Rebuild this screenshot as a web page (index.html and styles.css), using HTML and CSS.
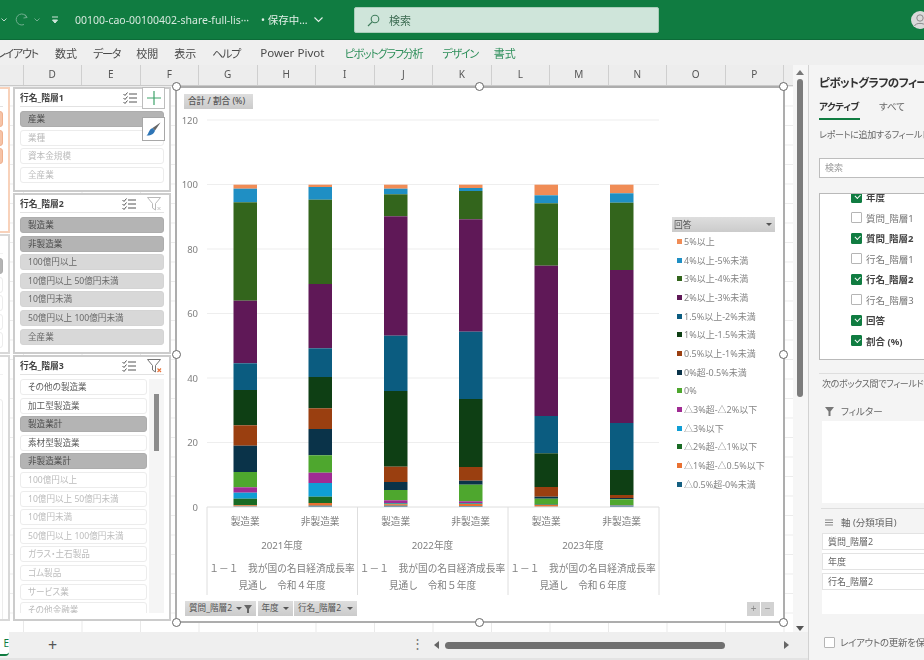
FILE: index.html
```html
<!DOCTYPE html>
<html lang="ja">
<head>
  <meta charset="UTF-8">
  <title>ピボットグラフ</title>
  <link rel="stylesheet" href="styles.css">
</head>
<body>
  <div class="app">
    <!-- title bar -->
    <header class="titlebar">
      <svg class="qa-icon qa-undo" width="6" height="4" viewBox="0 0 6 4"><path d="M0.5 0.5 L3 3 L5.5 0.5" fill="none" stroke="#bcd9c9"/></svg>
      <svg class="qa-icon qa-redo" width="15" height="15" viewBox="0 0 15 15"><path d="M11 2.5 L13 5.5 L9.5 6 M12.8 5.4 A5.5 5.5 0 1 0 10 12.5" fill="none" stroke="#6fae8e" stroke-width="1"/></svg>
      <svg class="qa-icon qa-chev" width="6" height="4" viewBox="0 0 6 4"><path d="M0.5 0.5 L3 3 L5.5 0.5" fill="none" stroke="#6fae8e"/></svg>
      <svg class="qa-icon qa-more" width="8" height="8" viewBox="0 0 8 8"><path d="M1 1 H7 M1.5 4 H6.5 L4 7 Z" fill="#cfe5da" stroke="#cfe5da" stroke-width="1"/></svg>
      <span class="doc-name">00100-cao-00100402-share-full-lis···</span>
      <span class="doc-state">• 保存中...</span>
      <svg class="state-chev" width="9" height="6" viewBox="0 0 9 6"><path d="M0.5 0.5 L4.5 4.5 L8.5 0.5" fill="none" stroke="#e3f0e9" stroke-width="1.1"/></svg>
      <div class="searchbox">
        <svg width="13" height="13" viewBox="0 0 13 13"><circle cx="8" cy="5" r="3.8" fill="none" stroke="#3f7d5c" stroke-width="1.1"/><path d="M5.2 7.8 L1 12" stroke="#3f7d5c" stroke-width="1.2"/></svg>
        <span>検索</span>
      </div>
      <div class="avatar">
        <svg width="18" height="18" viewBox="0 0 18 18"><circle cx="9" cy="9" r="9" fill="#d9d9d9"/><circle cx="9" cy="7" r="3.2" fill="none" stroke="#8a8a8a"/><path d="M3.5 15 C4.5 11.5 13.5 11.5 14.5 15" fill="none" stroke="#8a8a8a"/></svg>
      </div>
    </header>

    <!-- ribbon tabs -->
    <nav class="ribbon">
      <span class="tab tab-kana tab-cut">レイアウト</span>
      <span class="tab">数式</span>
      <span class="tab tab-kana">データ</span>
      <span class="tab">校閲</span>
      <span class="tab">表示</span>
      <span class="tab tab-kana">ヘルプ</span>
      <span class="tab tab-power">Power Pivot</span>
      <span class="tab tab-kana tab-green tab-analyze">ピボットグラフ分析</span>
      <span class="tab tab-kana tab-green">デザイン</span>
      <span class="tab tab-green">書式</span>
    </nav>

    <div class="main">
      <div class="workspace">
        <div class="work-row">
          <div class="sheet-col">
            <div class="col-heads">
              <span class="col-head col-first"></span>
              <span class="col-head">D</span><span class="col-head">E</span><span class="col-head">F</span>
              <span class="col-head">G</span><span class="col-head">H</span><span class="col-head">I</span>
              <span class="col-head">J</span><span class="col-head">K</span><span class="col-head">L</span>
              <span class="col-head">M</span><span class="col-head">N</span><span class="col-head">O</span>
              <span class="col-head">P</span>
            </div>

            <div class="sheet">
              <!-- slicers cut off at the left edge -->
              <div class="slicer slicer-cut slicer-a">
                <div class="slicer-head"></div>
                <div class="slicer-items">
                  <div class="item item-salmon"></div>
                  <div class="item item-salmon"></div>
                  <div class="item item-salmon"></div>
                </div>
              </div>
              <div class="slicer slicer-cut slicer-b">
                <div class="slicer-head"></div>
                <div class="slicer-items">
                  <div class="item item-on"></div>
                  <div class="item"></div>
                  <div class="item"></div>
                  <div class="item"></div>
                  <div class="item"></div>
                </div>
              </div>
              <div class="slicer slicer-cut slicer-c">
                <div class="slicer-head"></div>
                <div class="slicer-items">
                  <div class="item item-panel"></div>
                </div>
              </div>

              <!-- slicer 1 -->
              <section class="slicer slicer-1">
                <div class="slicer-head">
                  <span class="slicer-title">行名_階層1</span>
                  <svg class="multi-icon" width="14" height="12" viewBox="0 0 14 12"><path d="M0.5 2 L2 3.5 L4.5 0.5 M0.5 6 L2 7.5 L4.5 4.5 M0.5 10 L2 11.5 L4.5 8.5" fill="none" stroke="#555"/><path d="M6 2 H14 M6 6 H14 M6 10 H14" stroke="#555"/></svg>
                </div>
                <div class="slicer-items">
                  <div class="item item-on">産業</div>
                  <div class="item item-off">業種</div>
                  <div class="item item-off">資本金規模</div>
                  <div class="item item-off">全産業</div>
                </div>
              </section>

              <!-- slicer 2 -->
              <section class="slicer slicer-2">
                <div class="slicer-head">
                  <span class="slicer-title">行名_階層2</span>
                  <svg class="multi-icon" width="14" height="12" viewBox="0 0 14 12"><path d="M0.5 2 L2 3.5 L4.5 0.5 M0.5 6 L2 7.5 L4.5 4.5 M0.5 10 L2 11.5 L4.5 8.5" fill="none" stroke="#555"/><path d="M6 2 H14 M6 6 H14 M6 10 H14" stroke="#555"/></svg>
                  <svg class="filter-icon" width="15" height="14" viewBox="0 0 15 14"><path d="M0.5 0.5 H13.5 L8.5 6.5 V13 L5.5 11 V6.5 Z" fill="none" stroke="#b9b9b9"/><path d="M10.5 10 L13.5 13 M13.5 10 L10.5 13" stroke="#c8c8c8"/></svg>
                </div>
                <div class="slicer-items">
                  <div class="item item-on">製造業</div>
                  <div class="item item-on">非製造業</div>
                  <div class="item item-dim">100億円以上</div>
                  <div class="item item-dim">10億円以上 50億円未満</div>
                  <div class="item item-dim">10億円未満</div>
                  <div class="item item-dim">50億円以上 100億円未満</div>
                  <div class="item item-dim">全産業</div>
                </div>
              </section>

              <!-- slicer 3 -->
              <section class="slicer slicer-3">
                <div class="slicer-head">
                  <span class="slicer-title">行名_階層3</span>
                  <svg class="multi-icon" width="14" height="12" viewBox="0 0 14 12"><path d="M0.5 2 L2 3.5 L4.5 0.5 M0.5 6 L2 7.5 L4.5 4.5 M0.5 10 L2 11.5 L4.5 8.5" fill="none" stroke="#555"/><path d="M6 2 H14 M6 6 H14 M6 10 H14" stroke="#555"/></svg>
                  <svg class="filter-icon" width="15" height="14" viewBox="0 0 15 14"><path d="M0.5 0.5 H13.5 L8.5 6.5 V13 L5.5 11 V6.5 Z" fill="none" stroke="#777"/><path d="M10.5 9.5 L14 13 M14 9.5 L10.5 13" stroke="#e8743b" stroke-width="1.2"/></svg>
                </div>
                <div class="slicer-scroll">
                  <div class="slicer-items">
                    <div class="item">その他の製造業</div>
                    <div class="item">加工型製造業</div>
                    <div class="item item-on">製造業計</div>
                    <div class="item">素材型製造業</div>
                    <div class="item item-on">非製造業計</div>
                    <div class="item item-off">100億円以上</div>
                    <div class="item item-off">10億円以上 50億円未満</div>
                    <div class="item item-off">10億円未満</div>
                    <div class="item item-off">50億円以上 100億円未満</div>
                    <div class="item item-off">ガラス・土石製品</div>
                    <div class="item item-off">ゴム製品</div>
                    <div class="item item-off">サービス業</div>
                    <div class="item item-off">その他金融業</div>
                  </div>
                  <div class="slicer-track"><div class="slicer-thumb"></div></div>
                </div>
              </section>

              <button class="float-btn btn-add">
                <svg width="14" height="14" viewBox="0 0 14 14"><path d="M7 0 V14 M0 7 H14" stroke="#3fa36b" stroke-width="1.2"/></svg>
              </button>
              <button class="float-btn btn-brush">
                <svg width="15" height="15" viewBox="0 0 15 15"><path d="M14.5 0.5 L6.5 6 L9 8.5 Z" fill="#666"/><path d="M6.5 6 L9 8.5 C8.5 12 4 14 0.5 13.5 C3 12 2.5 7.5 6.5 6 Z" fill="#2e75b6"/></svg>
              </button>

              <!-- chart -->
              <div class="chart">
                <svg id="plot" class="plot" width="606" height="533" viewBox="177 88 606 533"></svg>
                <span class="field-btn field-value">合計 / 割合 (%)</span>
                <div class="axis-fields">
                  <span class="field-btn field-q">質問_階層2 <i class="caret"></i><svg width="8" height="8" viewBox="0 0 8 8"><path d="M0 0 H8 L5 4 V8 H3 V4 Z" fill="#666"/></svg></span>
                  <span class="field-btn field-y">年度 <i class="caret"></i></span>
                  <span class="field-btn field-r">行名_階層2 <i class="caret"></i></span>
                </div>
                <div class="zoom-btns">
                  <span class="zoom-btn">+</span>
                  <span class="zoom-btn">−</span>
                </div>
                <div class="legend">
                  <div class="legend-head"><span>回答</span><i class="caret"></i></div>
                  <div id="legendItems"></div>
                </div>
                <i class="handle h-tl"></i><i class="handle h-tc"></i><i class="handle h-tr"></i>
                <i class="handle h-ml"></i><i class="handle h-mr"></i>
                <i class="handle h-bl"></i><i class="handle h-bc"></i><i class="handle h-br"></i>
              </div>
            </div>
          </div>

          <div class="vscroll">
            <i class="arrow-up"></i>
            <div class="vthumb"></div>
            <i class="arrow-down"></i>
          </div>
        </div>

        <!-- sheet tabs and horizontal scrollbar -->
        <footer class="sheetbar">
          <div class="sheet-tab"><span>E</span></div>
          <span class="add-sheet">+</span>
          <span class="bar-dots">⋮</span>
          <i class="arrow-left"></i>
          <div class="hthumb"></div>
          <i class="arrow-right"></i>
        </footer>
      </div>

      <!-- field pane -->
      <aside class="pane">
        <div class="pane-body">
          <h2 class="pane-title">ピボットグラフのフィールド</h2>
          <div class="pane-tabs">
            <span class="pane-tab active">アクティブ</span>
            <span class="pane-tab">すべて</span>
          </div>
          <p class="hint">レポートに追加するフィールドを選択してください:</p>
          <div class="pane-search">検索</div>
          <div class="field-list">
            <label class="field checked"><i class="check"></i>年度</label>
            <label class="field"><i class="check"></i>質問_階層1</label>
            <label class="field checked"><i class="check"></i>質問_階層2</label>
            <label class="field"><i class="check"></i>行名_階層1</label>
            <label class="field checked"><i class="check"></i>行名_階層2</label>
            <label class="field"><i class="check"></i>行名_階層3</label>
            <label class="field checked"><i class="check"></i>回答</label>
            <label class="field checked"><i class="check"></i>割合 (%)</label>
          </div>
          <div class="pane-rule rule-1"></div>
          <p class="hint hint-2">次のボックス間でフィールドをドラッグしてください:</p>
          <div class="area-label label-filter">
            <svg width="9" height="9" viewBox="0 0 9 9"><path d="M0 0 H9 L5.5 4.5 V9 H3.5 V4.5 Z" fill="#777"/></svg>
            <span>フィルター</span>
          </div>
          <div class="area-box box-filter"></div>
          <div class="pane-rule rule-2"></div>
          <div class="area-label label-axis">
            <svg width="9" height="7" viewBox="0 0 9 7"><path d="M0 1 H8 M0 3.5 H8 M0 6 H8" stroke="#888"/></svg>
            <span>軸 (分類項目)</span>
          </div>
          <div class="area-box box-axis">
            <div class="area-row">質問_階層2</div>
            <div class="area-row">年度</div>
            <div class="area-row">行名_階層2</div>
          </div>
          <div class="defer"><i class="check"></i>レイアウトの更新を保留する</div>
        </div>
      </aside>
    </div>
  </div>
  <script src="chart.js"></script>
</body>
</html>
```

FILE: styles.css
```css
/* Base */
html, body {
  margin: 0;
  padding: 0;
  width: 924px;
  height: 660px;
  overflow: hidden;
  background: #fff;
}
* {
  box-sizing: border-box;
}
body {
  font-family: "Noto Sans", "Noto Sans CJK JP", sans-serif;
  font-feature-settings: "palt";
  color: #444;
}
.app {
  width: 924px;
  height: 660px;
  display: flex;
  flex-direction: column;
  overflow: hidden;
  filter: blur(0.6px); /* the reference is a soft, scaled-up capture */
}

/* Title bar */
.titlebar {
  height: 40px;
  flex: none;
  background: #107c41;
  display: flex;
  align-items: center;
  position: relative;
  border-bottom: 1px solid #0c6b38;
}
.qa-icon {
  flex: none;
}
.qa-undo { margin-left: 1px; }
.qa-redo { margin-left: 7px; }
.qa-chev { margin-left: 5px; }
.qa-more { margin-left: 11px; }
.doc-name {
  margin-left: 16px;
  width: 186px;
  flex: none;
  font-size: 10.5px;
  color: #d5e8dd;
  white-space: nowrap;
}
.doc-state {
  font-size: 10.5px;
  color: #e3f0e9;
  white-space: nowrap;
  flex: none;
  width: 52px;
}
.state-chev {
  margin-left: 1px;
  flex: none;
}
.searchbox {
  position: absolute;
  left: 354px;
  top: 7px;
  width: 305px;
  height: 26px;
  background: #cfe5da;
  border: 1px solid #a9cdb9;
  border-radius: 2px;
  display: flex;
  align-items: center;
  padding-left: 12px;
  gap: 9px;
  font-size: 11px;
  color: #3c6b52;
}
.avatar {
  position: absolute;
  left: 911px;
  top: 11px;
  width: 18px;
  height: 18px;
}

/* Ribbon */
.ribbon {
  height: 25px;
  flex: none;
  background: #efefef;
  display: flex;
  align-items: center;
  font-size: 11px;
  color: #4a4a4a;
  white-space: nowrap;
}
.tab {
  flex: none;
  margin-right: 16px;
}
.tab-kana {
  letter-spacing: -1.2px;
}
.tab-cut {
  margin-left: -4px;
  margin-right: 17px;
}
.tab-power {
  font-size: 11.6px;
  margin: 0 20px 0 4px;
}
.tab-green {
  color: #2f8f5b;
}
.tab-analyze {
  margin-right: 20px;
}

/* Work area */
.main {
  flex: 1;
  display: flex;
  min-height: 0;
}
.workspace {
  width: 808px;
  flex: none;
  display: flex;
  flex-direction: column;
}
.work-row {
  flex: 1;
  display: flex;
  min-height: 0;
}
.sheet-col {
  width: 793px;
  flex: none;
  display: flex;
  flex-direction: column;
}
.col-heads {
  height: 21px;
  flex: none;
  display: flex;
  background: #ededed;
  border-bottom: 1px solid #c9c9c9;
}
.col-head {
  width: 58.5px;
  flex: none;
  text-align: center;
  font-size: 10px;
  line-height: 19px;
  color: #555;
  border-right: 1px solid #cfcfcf;
}
.col-first {
  width: 23.5px;
}
.sheet {
  flex: 1;
  position: relative;
  background-color: #fff;
  background-image:
    linear-gradient(to right, #e9e9e9 1px, transparent 1px),
    linear-gradient(to bottom, #ececec 1px, transparent 1px);
  background-size: 58.5px 100%, 100% 19.5px;
  background-position: 23px 0, 0 0;
}

/* Slicers */
.slicer {
  position: absolute;
  background: #fff;
  border: 2px solid #cccccc;
  padding: 0 5px;
  overflow: hidden;
}
.slicer-1 { left: 13px; top: 1px; width: 158px; height: 105px; }
.slicer-2 { left: 13px; top: 107px; width: 158px; height: 161px; }
.slicer-3 { left: 13px; top: 269px; width: 158px; height: 266px; }
.slicer-cut {
  left: -140px;
  width: 150px;
  border-color: #f8d2bb;
}
.slicer-a { top: 1px; height: 146px; }
.slicer-b { top: 148px; height: 120px; border-color: #d8d8d8; }
.slicer-c { top: 269px; height: 266px; border-color: #d8d8d8; }
.slicer-b .slicer-head,
.slicer-c .slicer-head {
  border-bottom-color: #f2f2f2;
}
.slicer-head {
  height: 18px;
  display: flex;
  align-items: center;
  border-bottom: 1.5px solid #e2e2e2;
  margin-bottom: 4px;
}
.slicer-title {
  font-size: 8.8px;
  font-weight: 700;
  color: #444;
  flex: 1;
}
.filter-icon {
  margin-left: 11px;
  margin-right: 2px;
}
.slicer-1 .multi-icon {
  margin-right: 27px;
}
.slicer-items {
  display: flex;
  flex-direction: column;
  gap: 2.6px;
}
.item {
  height: 16px;
  flex: none;
  border: 1px solid #ececec;
  border-radius: 3px;
  background: #fff;
  padding-left: 7px;
  font-size: 8.6px;
  line-height: 14px;
  color: #5c5c5c;
  white-space: nowrap;
}
.item-on {
  background: #b4b4b4;
  border-color: #adadad;
  color: #4c4c4c;
}
.item-dim {
  background: #d8d8d8;
  border-color: #d4d4d4;
  color: #686868;
}
.item-off {
  color: #bcbcbc;
}
.item-salmon {
  background: #f6c3a6;
  border-color: #efb08e;
}
.item-panel {
  height: 230px;
  margin-top: 20px;
}
.slicer-scroll {
  display: flex;
  justify-content: space-between;
  height: 234px;
  overflow: hidden;
}
.slicer-scroll .slicer-items {
  width: 127px;
}
.slicer-track {
  width: 15px;
  background: #f5f5f5;
  padding: 15px 5px 0;
}
.slicer-thumb {
  height: 57px;
  background: #8c8c8c;
}
.float-btn {
  position: absolute;
  left: 142px;
  width: 23px;
  padding: 0;
  background: #fff;
  border: 1.5px solid #bdbdbd;
  display: flex;
  align-items: center;
  justify-content: center;
}
.btn-add { top: 1px; height: 22px; }
.btn-brush { top: 31px; height: 24px; border-color: #a8a8a8; }

/* Chart */
.chart {
  position: absolute;
  left: 175px;
  top: 0;
  width: 610px;
  height: 537px;
  background: #fff;
  border: 2px solid #adadad;
}
.plot {
  display: block;
  font-family: "Noto Sans", "Noto Sans CJK JP", sans-serif;
  font-feature-settings: normal;
}
.tick { font-size: 9.5px; fill: #808080; }
.cat { font-size: 9.7px; fill: #808080; }
.field-btn {
  background: linear-gradient(#dedede, #cbcbcb);
  height: 15px;
  font-size: 8.6px;
  line-height: 15px;
  color: #555;
  white-space: nowrap;
  display: flex;
  align-items: center;
  justify-content: space-between;
  padding: 0 4px;
}
.field-value {
  position: absolute;
  left: 7px;
  top: 6px;
  width: 69px;
  font-weight: 500;
}
.axis-fields {
  position: absolute;
  left: 8px;
  top: 513px;
  display: flex;
  gap: 1.5px;
}
.field-q { width: 71px; }
.field-y { width: 35px; }
.field-r { width: 63px; }
.caret {
  display: inline-block;
  width: 0;
  height: 0;
  border-left: 3px solid transparent;
  border-right: 3px solid transparent;
  border-top: 3.5px solid #555;
}
.field-q .caret { margin-left: 2px; }
.zoom-btns {
  position: absolute;
  left: 570px;
  top: 514px;
  display: flex;
  gap: 1px;
}
.zoom-btn {
  width: 13px;
  height: 14px;
  background: #d2d2d2;
  color: #8a8a8a;
  font-size: 10px;
  line-height: 13px;
  text-align: center;
}
.legend {
  position: absolute;
  left: 495px;
  top: 129px;
  width: 103px;
}
.legend-head {
  height: 15px;
  background: linear-gradient(#dedede, #cbcbcb);
  display: flex;
  align-items: center;
  justify-content: space-between;
  padding: 0 3px 0 2px;
  font-size: 8.8px;
  color: #555;
}
.legend-item {
  height: 18.7px;
  display: flex;
  align-items: center;
  font-size: 9px;
  color: #858585;
  white-space: nowrap;
}
.swatch {
  width: 5px;
  height: 5px;
  margin: 0 2px 0 5px;
  flex: none;
}

/* Selection handles */
.handle {
  position: absolute;
  width: 9px;
  height: 9px;
  border: 1.5px solid #666;
  border-radius: 50%;
  background: #fff;
}
.h-tl, .h-ml, .h-bl { left: -5.5px; }
.h-tc, .h-bc { left: 298px; }
.h-tr, .h-mr, .h-br { right: -5px; }
.h-tl, .h-tc, .h-tr { top: -6px; }
.h-ml, .h-mr { top: 262px; }
.h-bl, .h-bc, .h-br { bottom: -6px; }

/* Scrollbars */
.vscroll {
  width: 15px;
  flex: none;
  background: #f6f6f6;
  position: relative;
}
.vthumb {
  position: absolute;
  left: 4px;
  top: 14px;
  width: 6px;
  height: 318px;
  border-radius: 3px;
  background: #7c7c7c;
}
.arrow-up, .arrow-down, .arrow-left, .arrow-right {
  position: absolute;
  width: 0;
  height: 0;
}
.arrow-up {
  left: 3px;
  top: 5px;
  border-left: 4px solid transparent;
  border-right: 4px solid transparent;
  border-bottom: 5px solid #777;
}
.arrow-down {
  left: 3px;
  top: 561px;
  border-left: 4px solid transparent;
  border-right: 4px solid transparent;
  border-top: 5px solid #555;
}
.sheetbar {
  height: 28px;
  flex: none;
  background: #efefef;
  position: relative;
  border-bottom: 2px solid #e3e3e3;
}
.sheet-tab {
  width: 9px;
  height: 24px;
  background: #fff;
  border-radius: 0 0 4px 0;
  font-size: 10px;
  line-height: 22px;
  color: #107c41;
  overflow: hidden;
  direction: rtl;
  border-bottom: 2px solid #107c41;
}
.add-sheet {
  position: absolute;
  left: 48px;
  top: 3px;
  font-size: 16px;
  line-height: 20px;
  color: #555;
}
.bar-dots {
  position: absolute;
  left: 411px;
  top: 2px;
  font-size: 13px;
  line-height: 18px;
  color: #777;
}
.arrow-left {
  left: 434px;
  top: 9px;
  border-top: 4px solid transparent;
  border-bottom: 4px solid transparent;
  border-right: 5px solid #666;
}
.hthumb {
  position: absolute;
  left: 445px;
  top: 10px;
  width: 280px;
  height: 7px;
  border-radius: 4px;
  background: #707070;
}
.arrow-right {
  left: 784px;
  top: 9px;
  border-top: 4px solid transparent;
  border-bottom: 4px solid transparent;
  border-left: 5px solid #666;
}

/* Field pane */
.pane {
  width: 116px;
  flex: none;
  overflow: hidden;
  background: #f4f4f4;
  border-left: 1px solid #d2d2d2;
}
.pane-body {
  width: 240px;
  padding-left: 10px;
}
.pane-title {
  margin: 9px 0 0;
  font-size: 11.5px;
  line-height: 18px;
  font-weight: 700;
  letter-spacing: -0.6px;
  color: #333;
  white-space: nowrap;
}
.pane-tabs {
  height: 28px;
  display: flex;
  gap: 19px;
}
.pane-tab {
  padding-top: 8px;
  font-size: 9.5px;
  line-height: 14px;
  color: #666;
  white-space: nowrap;
}
.pane-tab.active {
  width: 41px;
  height: 28px;
  font-weight: 700;
  letter-spacing: -0.3px;
  color: #333;
  border-bottom: 2px solid #107c41;
}
.hint {
  margin: 8px 0 0;
  font-size: 9px;
  line-height: 14px;
  letter-spacing: -0.3px;
  color: #666;
  white-space: nowrap;
}
.pane-search {
  margin-top: 16px;
  height: 20px;
  background: #fff;
  border: 1px solid #bdbdbd;
  padding-left: 5px;
  font-size: 9px;
  line-height: 18px;
  color: #999;
}
.field-list {
  margin-top: 15px;
  height: 167px;
  background: #fff;
  border: 1px solid #b9b9b9;
  overflow: hidden;
  padding: 0 0 0 31px;
}
.field {
  height: 20.5px;
  display: flex;
  align-items: center;
  gap: 4px;
  font-size: 9.5px;
  color: #777;
}
.field:first-child {
  margin-top: -7px;
}
.field.checked {
  font-weight: 700;
  color: #444;
}
.check {
  width: 11px;
  height: 11px;
  flex: none;
  display: block;
  position: relative;
  background: #fff;
  border: 1px solid #b5b5b5;
  border-radius: 1px;
}
.checked .check {
  background: #107c41;
  border-color: #107c41;
}
.checked .check::after {
  content: "";
  position: absolute;
  left: 2.5px;
  top: 1.5px;
  width: 4px;
  height: 2.5px;
  border-left: 1.2px solid #fff;
  border-bottom: 1.2px solid #fff;
  transform: rotate(-45deg);
}
.pane-rule {
  border-top: 1px solid #dedede;
}
.rule-1 { margin-top: 13px; }
.rule-2 { margin: 5px 0 0 2px; }
.hint-2 {
  margin: 3px 0 0 3px;
}
.area-label {
  height: 14px;
  display: flex;
  align-items: center;
  gap: 7px;
  padding-left: 6px;
  font-size: 9.5px;
  color: #666;
}
.label-filter { margin-top: 13px; }
.label-axis { margin-top: 6px; }
.area-box {
  margin: 3px 0 0 3px;
  background: #fff;
}
.box-filter { height: 82px; }
.box-axis {
  margin-top: 4px;
  height: 81px;
  display: flex;
  flex-direction: column;
  gap: 3px;
}
.area-row {
  height: 17px;
  border: 1px solid #e3e3e3;
  padding-left: 5px;
  font-size: 9px;
  line-height: 15px;
  color: #666;
  background: #fff;
}
.defer {
  margin: 21px 0 0 5px;
  display: flex;
  align-items: center;
  gap: 5px;
  font-size: 9.5px;
  letter-spacing: -0.3px;
  color: #666;
  white-space: nowrap;
}
```

FILE: chart.js
```javascript
// Series in stacking order, top of the bar first
const series = [
  ['5%以上', '#f08c56'],
  ['4%以上-5%未満', '#1f8fc4'],
  ['3%以上-4%未満', '#33651c'],
  ['2%以上-3%未満', '#5f1857'],
  ['1.5%以上-2%未満', '#0b5c80'],
  ['1%以上-1.5%未満', '#0e3f14'],
  ['0.5%以上-1%未満', '#9a3f10'],
  ['0%超-0.5%未満', '#0a3349'],
  ['0%', '#4ea72e'],
  ['△3%超-△2%以下', '#a02b93'],
  ['△3%以下', '#0f9ed5'],
  ['△2%超-△1%以下', '#196b24'],
  ['△1%超-△0.5%以下', '#e97132'],
  ['△0.5%超-0%未満', '#156082']
];

// y of each segment edge, read off the picture
const bars = [
  [233.5, [184.7,188.7,202.3,300.7,363.3,390,425.3,445.7,472,487.3,492.7,498.7,505.3,506.5,507]],
  [308.5, [184.7,187,199.7,284,348.3,377,408.3,429,455.3,472.7,483,496.7,503,505.7,507]],
  [384, [184.7,188.7,194.3,216.3,335.7,391,466.7,482,490,500.3,503,503.6,504.3,505.7,507]],
  [459, [184.7,188,191,219.3,331.7,399,467,480.7,484.7,501.3,503,503.6,504,506,507]],
  [534.5, [184.7,195.3,203.3,265.7,416,453.3,487,496.7,498.7,504,504.2,504.4,505,506.8,507]],
  [610, [184.7,193.3,202.7,270,423,470,495,498,499.3,505,505.2,505.4,505.6,505.8,507]]
];

const groups = [
  { x: 282, year: '2021年度', note: '令和４年度' },
  { x: 432.5, year: '2022年度', note: '令和５年度' },
  { x: 583, year: '2023年度', note: '令和６年度' }
];

const plot = document.getElementById('plot');
const NS = 'http://www.w3.org/2000/svg';

function add(tag, attrs, text) {
  const el = document.createElementNS(NS, tag);
  Object.keys(attrs).forEach(k => el.setAttribute(k, attrs[k]));
  if (text) el.textContent = text;
  plot.appendChild(el);
}

// gridlines and value axis
[120, 100, 80, 60, 40, 20].forEach(v => {
  const y = 507 - v * 3.225;
  add('line', { x1: 207, x2: 659, y1: y, y2: y, stroke: '#eeeeee', 'stroke-width': 1.2 });
});
[120, 100, 80, 60, 40, 20, 0].forEach(v => {
  add('text', { x: 198, y: 507 - v * 3.225 + 3.5, class: 'tick', 'text-anchor': 'end' }, String(v));
});

// bars
bars.forEach(([x, edges]) => {
  series.forEach(([, color], i) => {
    add('rect', { x: x, y: edges[i], width: 23.5, height: edges[i + 1] - edges[i], fill: color });
  });
});

// category axis
add('line', { x1: 207, x2: 659, y1: 507, y2: 507, stroke: '#dedede' });
[207, 357.5, 508, 659].forEach(x => {
  add('line', { x1: x, x2: x, y1: 507, y2: 595, stroke: '#dedede' });
});
bars.forEach(([x], i) => {
  add('text', { x: x + 11.7, y: 525, class: 'cat', 'text-anchor': 'middle' }, i % 2 ? '非製造業' : '製造業');
});
groups.forEach(g => {
  add('text', { x: g.x, y: 549, class: 'cat', 'text-anchor': 'middle' }, g.year);
  add('text', { x: g.x, y: 572, class: 'cat', 'text-anchor': 'middle' }, '１－１　我が国の名目経済成長率');
  add('text', { x: g.x, y: 589, class: 'cat', 'text-anchor': 'middle' }, '見通し　' + g.note);
});

// legend
const legendItems = document.getElementById('legendItems');
series.forEach(([label, color]) => {
  const row = document.createElement('div');
  row.className = 'legend-item';
  const swatch = document.createElement('i');
  swatch.className = 'swatch';
  swatch.style.background = color;
  row.appendChild(swatch);
  row.appendChild(document.createTextNode(label));
  legendItems.appendChild(row);
});
```
